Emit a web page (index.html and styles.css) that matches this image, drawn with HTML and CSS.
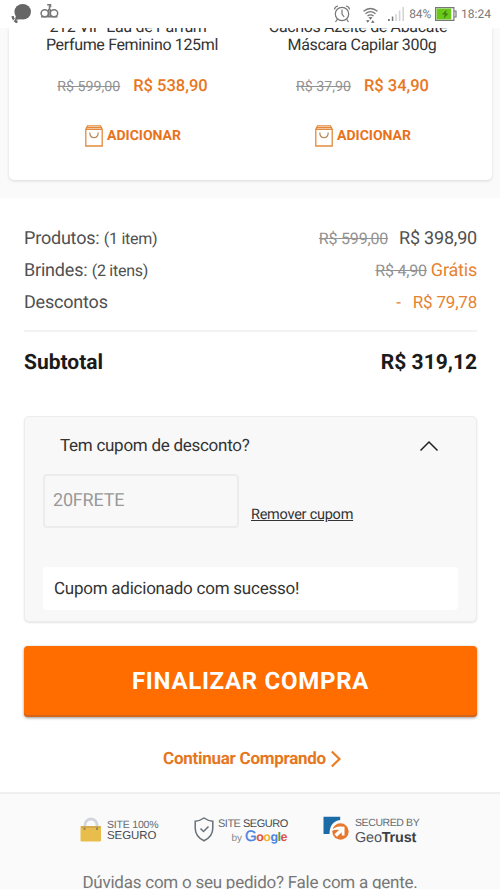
FILE: index.html
```html
<!DOCTYPE html>
<html lang="pt-BR">
<head>
<meta charset="utf-8">
<title>Carrinho</title>
<link rel="stylesheet" href="styles.css">
</head>
<body>
<header class="status">
  <svg class="status-chat" width="24" height="28" viewBox="0 0 24 28"><ellipse cx="12.700" cy="11.800" rx="8.300" ry="7.700" fill="#666"/><path d="M6 15l-1 5 7-1z" fill="#666"/><path d="M2.600 16.200c.5 3.400 2.400 5.400 5.800 6" fill="none" stroke="#666" stroke-width="2.400" stroke-dasharray="3.500 1"/></svg>
  <svg class="status-glasses" width="20" height="16" viewBox="0 0 20 16" fill="none" stroke="#777" stroke-width="1.500"><ellipse cx="4.800" cy="10.300" rx="3.700" ry="3.500"/><ellipse cx="14" cy="10.300" rx="3.700" ry="3.500"/><path d="M8.500 14V7q.9-1.500 1.800 0V14M9.500 6V3.600h1V1.700H7.200M1 13.800h16.500"/></svg>
  <div class="status-right">
    <svg class="ic-alarm" width="18" height="20" viewBox="0 0 18 20" fill="none" stroke="#777" stroke-width="1.200"><circle cx="9" cy="10" r="6.700"/><path d="M9 5.500V10l2.200 3M1.500 5.500q.2-3 3.500-3.500M16.500 5.500q-.2-3-3.500-3.500M4.500 15l-2 3M13.500 15l2 3"/></svg>
    <svg class="ic-wifi" width="17" height="20" viewBox="0 0 17 20" fill="none" stroke="#777" stroke-width="1.300"><path d="M1.500 6.200q7-5.400 14 0M3.500 8.700q5-4 10 0M5.500 11q3-2.400 6 0"/><path d="M6.500 12.200h4l-2 2.500zM4 15.200h3.600l-1.800 2.600zM9 17.800h3.600l-1.800-2.600z" fill="#666" stroke="none"/></svg>
    <svg class="ic-signal" width="17" height="15" viewBox="0 0 17 15"><path d="M0 12h1.800v2H0zM3.800 9.500h1.500V14H3.800z" fill="#777"/><path d="M7.200 7h1.600v7H7.200zM10.800 3.500h1.600V14h-1.600zM14.400 0H16v14h-1.600z" fill="#d4d4d4"/></svg>
    <span class="pct">84%</span>
    <svg class="ic-battery" width="22" height="14" viewBox="0 0 22 14"><path d="M.6.600h18.300v12.800H.6zM19 4h2v6h-2" fill="#fff" stroke="#777" stroke-width="1.200"/><path d="M1.500 1.500h14.800v11H1.500z" fill="#69c818"/><path d="M11.800 2.500L7 7.600h2.800L8.500 11.700l5-5.300h-2.800z" fill="#417d13"/></svg>
    <span class="clock">18:24</span>
  </div>
</header>

<section class="suggestions">
  <div class="card">
    <article class="product">
      <p class="name"><span>212 VIP Eau de Parfum</span><br>Perfume Feminino 125ml</p>
      <p class="prices"><s>R$ 599,00</s><b>R$ 538,90</b></p>
      <a class="add"><svg width="18" height="22" viewBox="0 0 18 22" fill="none" stroke="#e48a3c" stroke-width="1.300"><path d="M.8 4.400h16.400V21H.8zM.8 4.400L2.500.8h13l1.700 3.600M2 2.600h14"/><path d="M4.800 7.500c0 6.800 8.400 6.800 8.400 0" stroke="#b98b5e"/></svg><span>ADICIONAR</span></a>
    </article>
    <article class="product second">
      <p class="name"><span>Cachos Azeite de Abacate</span><br>Máscara Capilar 300g</p>
      <p class="prices"><s>R$ 37,90</s><b>R$ 34,90</b></p>
      <a class="add"><svg width="18" height="22" viewBox="0 0 18 22" fill="none" stroke="#e48a3c" stroke-width="1.300"><path d="M.8 4.400h16.400V21H.8zM.8 4.400L2.500.8h13l1.700 3.600M2 2.600h14"/><path d="M4.800 7.500c0 6.800 8.400 6.800 8.400 0" stroke="#b98b5e"/></svg><span>ADICIONAR</span></a>
    </article>
  </div>
</section>

<main class="summary">
  <div class="row"><span>Produtos: <small>(1 item)</small></span><span><s>R$ 599,00</s><span class="value">R$ 398,90</span></span></div>
  <div class="row"><span>Brindes: <small>(2 itens)</small></span><span><s>R$ 4,90</s><span class="free">Grátis</span></span></div>
  <div class="row"><span>Descontos</span><span class="discount"><span class="minus">-</span>R$ 79,78</span></div>
  <div class="row subtotal"><span>Subtotal</span><span>R$ 319,12</span></div>

  <div class="coupon">
    <div class="coupon-head"><span>Tem cupom de desconto?</span>
      <svg width="20" height="12" viewBox="0 0 20 12" fill="none" stroke="#222" stroke-width="1.500"><path d="M1.500 10.500L10 2l8.500 8.500"/></svg>
    </div>
    <div class="coupon-form"><div class="field">20FRETE</div><a class="remove">Remover cupom</a></div>
    <div class="message">Cupom adicionado com sucesso!</div>
  </div>

  <div class="checkout">FINALIZAR COMPRA</div>
  <a class="continue"><span>Continuar Comprando</span><svg width="12" height="18" viewBox="0 0 12 18" fill="none" stroke="#e87d22" stroke-width="2.200"><path d="M1.800 1.500L9.500 9l-7.700 7.500"/></svg></a>
</main>

<footer class="footer">
  <div class="seals">
    <div class="seal lock">
      <svg width="22" height="26" viewBox="0 0 22 26"><path d="M5 13V9a6 6 0 0 1 12 0v4" fill="none" stroke="#d2d5dd" stroke-width="2.800"/><rect x=".5" y="10" width="20.500" height="15.500" rx="1" fill="#e8bd4c"/><path d="M1 11h19.500" stroke="#cda552" stroke-width="1.500"/><path d="M4.500 11.500V14M17 11.500V14" stroke="#9c8654" stroke-width="2"/></svg>
      <div class="seal-text"><span class="s1">SITE 100%</span><span class="s2">SEGURO</span></div>
    </div>
    <div class="seal google">
      <svg width="20" height="25" viewBox="0 0 20 25" fill="none" stroke="#687078" stroke-width="1.500"><path d="M10 1Q6 3.800 1.200 4.200V11c0 6.500 4 10.500 8.800 12.800 4.800-2.300 8.800-6.300 8.800-12.800V4.200Q14 3.800 10 1z"/><path d="M6.500 11.500l3 3 5-5"/></svg>
      <div class="seal-text"><span class="g1">SITE <b>SEGURO</b></span><span class="g2"><i>by</i><em><span class="bl big">G</span><span class="rd">o</span><span class="yl">o</span><span class="bl">g</span><span class="gr">l</span><span class="rd">e</span></em></span></div>
    </div>
    <div class="seal geo">
      <svg width="27" height="25" viewBox="0 0 27 25"><path d="M.5.700h16.700v3.200Q6.500 5.300 6.500 18H.5z" fill="#1c6ba7"/><circle cx="17.500" cy="15.500" r="8.200" fill="#e6792e"/><path d="M8.500 15Q12 9 21.500 10.800v8.700h-2.600l-.3-3.200-4.600 4.500-2.600-2.600 4.700-4.200q-4-.8-7.600 1z" fill="#fff"/></svg>
      <div class="seal-text"><span class="t1">SECURED BY</span><span class="t2">Geo<b>Trust</b></span></div>
    </div>
  </div>
  <p class="help">Dúvidas com o seu pedido? Fale com a gente.</p>
</footer>
</body>
</html>
```
FILE: styles.css
```css
* { box-sizing: border-box; }
html, body { height: 100%; overflow: hidden; }
body { margin: 0; width: 500px; background: #fff; font-family: Roboto, "Liberation Sans", sans-serif; color: #333; white-space: nowrap; text-rendering: geometricPrecision; }
p { margin: 0; }
svg { display: block; flex: none; }
s { color: #929292; }

.status { height: 28px; display: flex; align-items: flex-start; background: #fff; color: #777; }
.status-chat { margin-left: 10px; }
.status-glasses { margin: 3px 0 0 6px; }
.status-right { display: flex; margin-left: auto; padding-right: 9px; }
.ic-alarm { margin-top: 4px; }
.ic-wifi { margin: 5px 0 0 11px; }
.ic-signal { margin: 7px 0 0 9px; }
.pct, .clock { font-size: 12px; line-height: 14px; padding-top: 7px; }
.pct { margin-left: 4px; letter-spacing: -.1px; }
.ic-battery { margin: 7px 4px 0 4px; }

.suggestions { height: 170px; padding: 0 8px 18px 9px; background: #fafafa; overflow: hidden; }
.card { height: 152px; display: grid; grid-template-columns: 246px 1fr; background: #fff; border-radius: 0 0 5px 5px; box-shadow: 0 1px 3px #d9d9d9; overflow: hidden; }
.product { text-align: center; }
.name { margin-top: -10px; font-size: 16px; line-height: 18px; letter-spacing: -.34px; color: #333; }
.name span { padding-right: 8px; }
.prices { display: flex; justify-content: center; align-items: baseline; gap: 13px; margin: 21px 0 0 1px; line-height: 24px; }
.prices s { font-size: 14.200px; }
.prices b { font-size: 16.500px; font-weight: 500; color: #e87722; }
.add { display: flex; justify-content: center; align-items: center; gap: 4px; margin: 26px 0 0 2px; height: 22px; font-size: 14px; font-weight: 700; color: #e8721c; }
.second { margin-left: -23px; }

.summary { padding: 25px 23px 0 24px; height: 594px; }
.row { display: flex; justify-content: space-between; height: 32px; line-height: 32px; font-size: 18px; letter-spacing: -.2px; color: #505050; }
.row small { font-size: 16px; letter-spacing: -.25px; }
.row s { font-size: 16px; }
.value { margin-left: 11px; }
.free { margin-left: 4px; color: #e58332; }
.discount { color: #e58332; font-size: 17px; }
.minus { margin-right: 12px; }
.subtotal { margin-top: 11px; border-top: 2px solid #f3f3f3; height: 62px; line-height: 62px; font-size: 21px; font-weight: 700; letter-spacing: 0; color: #1b1b1b; }

.coupon { height: 206px; margin-top: 24px; padding: 0 18px; background: #f8f8f8; border: 1px solid #ececec; border-radius: 5px; box-shadow: 0 1px 2px #e4e4e4; }
.coupon-head { display: flex; justify-content: space-between; align-items: center; height: 57px; padding: 0 19px 0 17px; font-size: 17px; letter-spacing: -.27px; }
.coupon-form { display: flex; height: 54px; gap: 12px; }
.field { width: 196px; padding-left: 8px; border: 2px solid #ececec; border-radius: 4px; line-height: 50px; font-size: 18px; letter-spacing: -.2px; color: #999; }
.remove { padding-top: 32px; line-height: 18px; font-size: 14.500px; letter-spacing: -.25px; text-decoration: underline; }
.message { margin-top: 39px; height: 43px; padding-left: 11px; background: #fff; border-radius: 4px; line-height: 44px; font-size: 17px; letter-spacing: -.24px; }

.checkout { height: 71px; margin-top: 24px; background: #ff6c00; border-radius: 4px; box-shadow: inset 0 -2px #d46519, 0 1px 3px #999; color: #fff; text-align: center; line-height: 70px; font-size: 24px; font-weight: 700; letter-spacing: .7px; }
.continue { display: flex; justify-content: center; align-items: center; gap: 4px; height: 26px; margin-top: 29px; padding-left: 4px; font-size: 17px; font-weight: 700; letter-spacing: -.26px; color: #e5771f; }

.footer { height: 97px; background: #fafafa; border-top: 2px solid #efefef; }
.seals { display: flex; height: 74px; padding: 22px 0 0 80px; }
.seal { display: flex; font-family: "Liberation Sans", sans-serif; color: #666b70; }
.seal-text { display: flex; flex-direction: column; }
.lock { width: 114px; }
.google { width: 129px; }
.lock .seal-text { margin-left: 5px; padding-top: 4px; }
.s1, .s2 { font-size: 10.500px; line-height: 11px; letter-spacing: -.2px; }
.s2 { font-size: 11.500px; letter-spacing: -.1px; color: #45494e; }
.google .seal-text { margin-left: 4px; width: 69px; padding-top: 2px; }
.google svg { margin-top: 1px; }
.g1 { font-size: 11px; line-height: 12px; letter-spacing: -.5px; }
.g1 b { color: #45494e; font-weight: 400; }
.g2 { display: flex; justify-content: flex-end; align-items: baseline; gap: 3px; line-height: 13px; }
.g2 i { font-size: 10px; font-style: normal; color: #888; }
.g2 em { font-size: 12.500px; font-style: normal; font-weight: 700; letter-spacing: -.5px; }
.big { font-size: 15px; font-weight: 400; -webkit-text-stroke: .4px #4b83e2; }
.bl { color: #4b83e2; }
.rd { color: #df5044; }
.yl { color: #efb62c; }
.gr { color: #3aa457; }
.geo .seal-text { margin-left: 5px; padding-top: 1px; }
.t1 { font-size: 10.500px; line-height: 13px; letter-spacing: -.4px; }
.t2 { font-size: 14.400px; line-height: 16px; letter-spacing: -.15px; color: #50545a; }
.t2 b { color: #3c4045; }
.help { text-align: center; font-size: 17px; line-height: 25px; letter-spacing: -.24px; margin-top: 3px; color: #777; }
```
